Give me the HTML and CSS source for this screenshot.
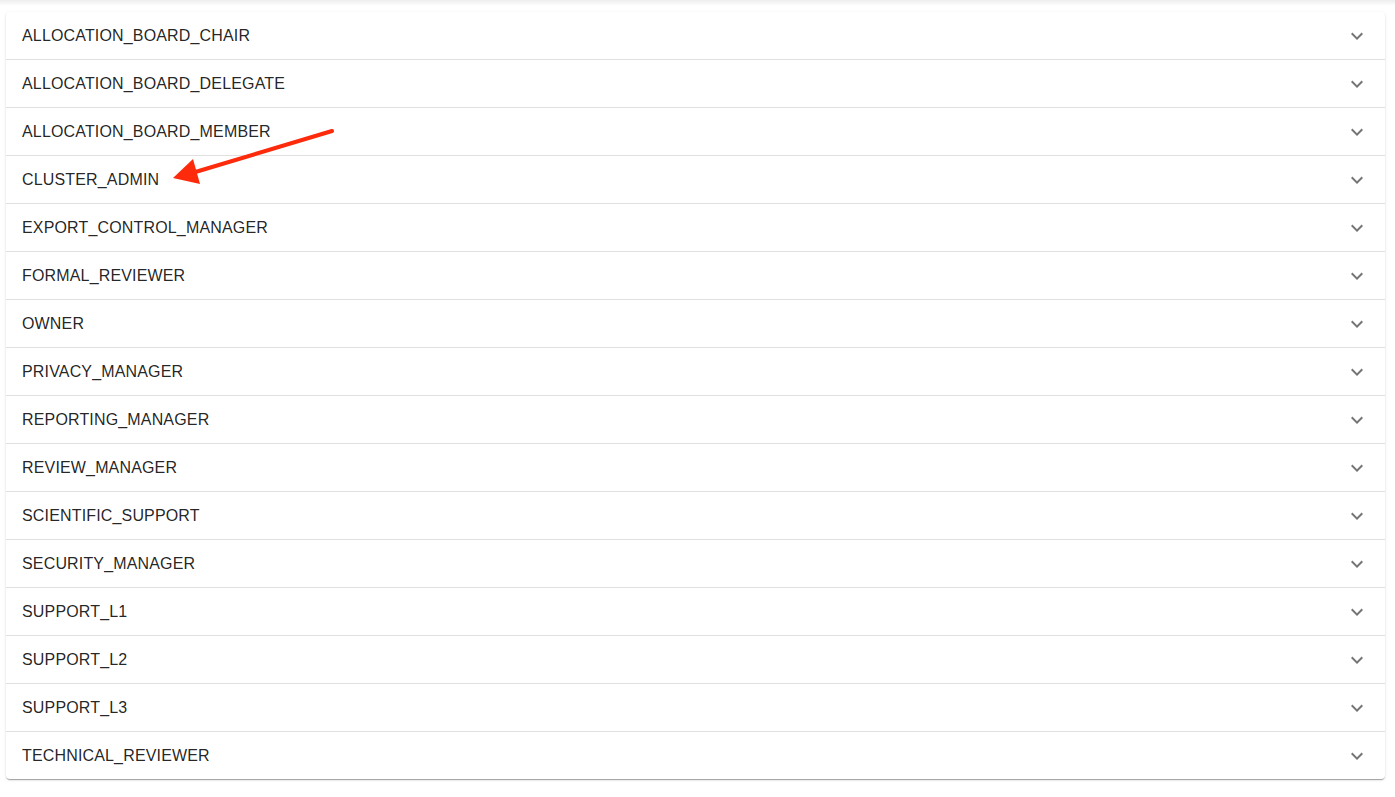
FILE: index.html
```html
<!DOCTYPE html>
<html lang="en">
<head>
<meta charset="utf-8">
<title>Roles</title>
<link rel="stylesheet" href="styles.css">
</head>
<body>
<div class="top-shade"></div>
<main class="page">
  <div class="accordion-list">
    <div class="row"><span class="label">ALLOCATION_BOARD_CHAIR</span><svg class="chev" viewBox="0 0 24 24"><path d="M16.59 8.59 12 13.17 7.41 8.59 6 10l6 6 6-6z"/></svg></div>
    <div class="row"><span class="label">ALLOCATION_BOARD_DELEGATE</span><svg class="chev" viewBox="0 0 24 24"><path d="M16.59 8.59 12 13.17 7.41 8.59 6 10l6 6 6-6z"/></svg></div>
    <div class="row"><span class="label">ALLOCATION_BOARD_MEMBER</span><svg class="chev" viewBox="0 0 24 24"><path d="M16.59 8.59 12 13.17 7.41 8.59 6 10l6 6 6-6z"/></svg></div>
    <div class="row"><span class="label">CLUSTER_ADMIN</span><svg class="chev" viewBox="0 0 24 24"><path d="M16.59 8.59 12 13.17 7.41 8.59 6 10l6 6 6-6z"/></svg></div>
    <div class="row"><span class="label">EXPORT_CONTROL_MANAGER</span><svg class="chev" viewBox="0 0 24 24"><path d="M16.59 8.59 12 13.17 7.41 8.59 6 10l6 6 6-6z"/></svg></div>
    <div class="row"><span class="label">FORMAL_REVIEWER</span><svg class="chev" viewBox="0 0 24 24"><path d="M16.59 8.59 12 13.17 7.41 8.59 6 10l6 6 6-6z"/></svg></div>
    <div class="row"><span class="label">OWNER</span><svg class="chev" viewBox="0 0 24 24"><path d="M16.59 8.59 12 13.17 7.41 8.59 6 10l6 6 6-6z"/></svg></div>
    <div class="row"><span class="label">PRIVACY_MANAGER</span><svg class="chev" viewBox="0 0 24 24"><path d="M16.59 8.59 12 13.17 7.41 8.59 6 10l6 6 6-6z"/></svg></div>
    <div class="row"><span class="label">REPORTING_MANAGER</span><svg class="chev" viewBox="0 0 24 24"><path d="M16.59 8.59 12 13.17 7.41 8.59 6 10l6 6 6-6z"/></svg></div>
    <div class="row"><span class="label">REVIEW_MANAGER</span><svg class="chev" viewBox="0 0 24 24"><path d="M16.59 8.59 12 13.17 7.41 8.59 6 10l6 6 6-6z"/></svg></div>
    <div class="row"><span class="label">SCIENTIFIC_SUPPORT</span><svg class="chev" viewBox="0 0 24 24"><path d="M16.59 8.59 12 13.17 7.41 8.59 6 10l6 6 6-6z"/></svg></div>
    <div class="row"><span class="label">SECURITY_MANAGER</span><svg class="chev" viewBox="0 0 24 24"><path d="M16.59 8.59 12 13.17 7.41 8.59 6 10l6 6 6-6z"/></svg></div>
    <div class="row"><span class="label">SUPPORT_L1</span><svg class="chev" viewBox="0 0 24 24"><path d="M16.59 8.59 12 13.17 7.41 8.59 6 10l6 6 6-6z"/></svg></div>
    <div class="row"><span class="label">SUPPORT_L2</span><svg class="chev" viewBox="0 0 24 24"><path d="M16.59 8.59 12 13.17 7.41 8.59 6 10l6 6 6-6z"/></svg></div>
    <div class="row"><span class="label">SUPPORT_L3</span><svg class="chev" viewBox="0 0 24 24"><path d="M16.59 8.59 12 13.17 7.41 8.59 6 10l6 6 6-6z"/></svg></div>
    <div class="row"><span class="label">TECHNICAL_REVIEWER</span><svg class="chev" viewBox="0 0 24 24"><path d="M16.59 8.59 12 13.17 7.41 8.59 6 10l6 6 6-6z"/></svg></div>
  </div>
</main>
<svg class="annotation" width="1395" height="797" viewBox="0 0 1395 797">
  <line x1="332" y1="131" x2="192" y2="173" stroke="#fd2a0c" stroke-width="4" stroke-linecap="round"/>
  <polygon points="173,178 193,159 200,184" fill="#fd2a0c"/>
</svg>
</body>
</html>
```

FILE: styles.css
```css
html, body {
  margin: 0;
  padding: 0;
  background: #ffffff;
}

body {
  font-family: "Liberation Sans", Arial, Helvetica, sans-serif;
  color: rgba(0, 0, 0, 0.87);
  position: relative;
  width: 1395px;
  height: 797px;
  overflow: hidden;
}

.top-shade {
  height: 6px;
  background: linear-gradient(to bottom, rgba(0, 0, 0, 0.07), rgba(0, 0, 0, 0));
}

.page {
  padding: 6px 10px 0 6px;
}

.accordion-list {
  background: #fff;
  border-radius: 4px;
  box-shadow: 0 2px 1px -1px rgba(0, 0, 0, 0.2), 0 1px 1px 0 rgba(0, 0, 0, 0.14), 0 1px 3px 0 rgba(0, 0, 0, 0.12);
}

.row {
  display: flex;
  align-items: center;
  justify-content: space-between;
  height: 48px;
  box-sizing: border-box;
  padding: 0 16px;
  border-top: 1px solid rgba(0, 0, 0, 0.12);
}

.row:first-child {
  border-top: none;
  height: 47px;
}

.label {
  font-size: 16px;
  line-height: 24px;
  letter-spacing: 0.01em;
}

.chev {
  width: 24px;
  height: 24px;
  fill: rgba(0, 0, 0, 0.54);
  flex: none;
}

.annotation {
  position: absolute;
  left: 0;
  top: 0;
  pointer-events: none;
}
```
